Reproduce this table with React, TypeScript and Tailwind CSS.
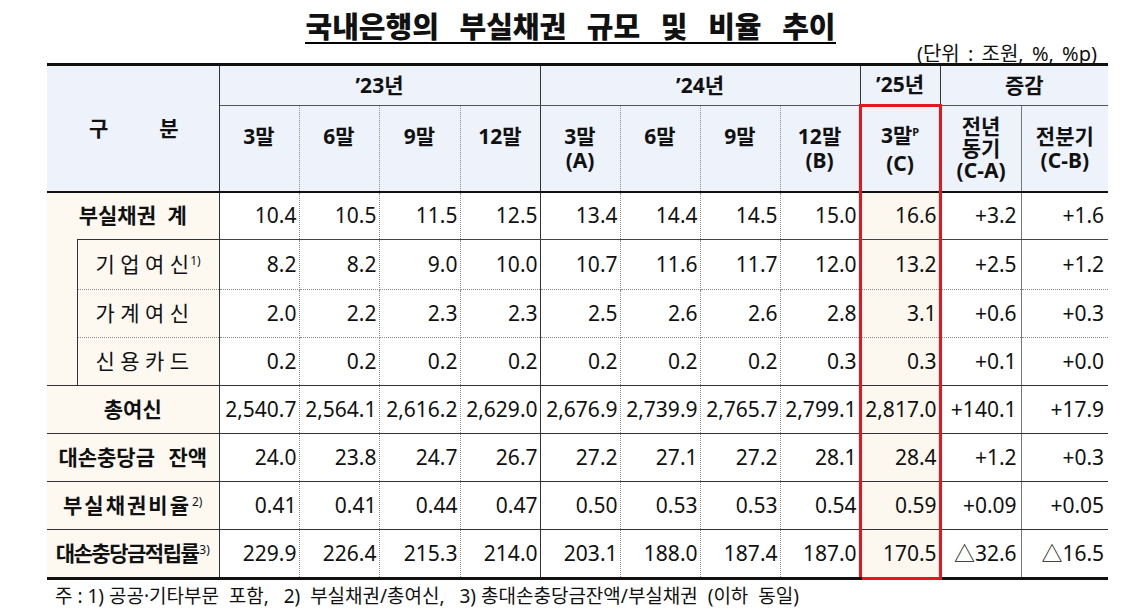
const VDOT = "[border-right:1px_dotted_#8c8c8c]";
const VSOLID = "[border-right:1px_solid_#333]";
const VGRAY = "[border-right:1px_solid_#777]";
const RED = "[border-left:3px_solid_#e5161d] [border-right:3px_solid_#e5161d]";

// right-edge style of each data column
const colRight = [VDOT, VDOT, VDOT, VSOLID, VDOT, VDOT, VDOT, VSOLID, RED, VGRAY, ""];

type Row = {
  label: React.ReactNode;
  sub?: boolean;
  h: string;
  bottom: string;
  values: string[];
};

function Sup({ children }: { children: React.ReactNode }) {
  return <span className="relative -top-[7px] ml-[1px] text-[12px] font-normal tracking-normal">{children}</span>;
}

const rows: Row[] = [
  {
    label: <span className="[word-spacing:6px]">부실채권 계</span>,
    h: "h-[48px]",
    bottom: "[border-bottom:1px_solid_#444]",
    values: ["10.4", "10.5", "11.5", "12.5", "13.4", "14.4", "14.5", "15.0", "16.6", "+3.2", "+1.6"],
  },
  {
    label: (
      <>
        기 업 여 신<Sup>1)</Sup>
      </>
    ),
    sub: true,
    h: "h-[50px]",
    bottom: "[border-bottom:1px_dotted_#8c8c8c]",
    values: ["8.2", "8.2", "9.0", "10.0", "10.7", "11.6", "11.7", "12.0", "13.2", "+2.5", "+1.2"],
  },
  {
    label: "가 계 여 신",
    sub: true,
    h: "h-[48px]",
    bottom: "[border-bottom:1px_dotted_#8c8c8c]",
    values: ["2.0", "2.2", "2.3", "2.3", "2.5", "2.6", "2.6", "2.8", "3.1", "+0.6", "+0.3"],
  },
  {
    label: "신 용 카 드",
    sub: true,
    h: "h-[48px]",
    bottom: "[border-bottom:1px_solid_#333]",
    values: ["0.2", "0.2", "0.2", "0.2", "0.2", "0.2", "0.2", "0.3", "0.3", "+0.1", "+0.0"],
  },
  {
    label: "총여신",
    h: "h-[48px]",
    bottom: "[border-bottom:1px_solid_#333]",
    values: ["2,540.7", "2,564.1", "2,616.2", "2,629.0", "2,676.9", "2,739.9", "2,765.7", "2,799.1", "2,817.0", "+140.1", "+17.9"],
  },
  {
    label: <span className="[word-spacing:8px]">대손충당금 잔액</span>,
    h: "h-[48px]",
    bottom: "[border-bottom:1px_solid_#333]",
    values: ["24.0", "23.8", "24.7", "26.7", "27.2", "27.1", "27.2", "28.1", "28.4", "+1.2", "+0.3"],
  },
  {
    label: (
      <span className="tracking-[2px]">
        부실채권비율<Sup>2)</Sup>
      </span>
    ),
    h: "h-[48px]",
    bottom: "[border-bottom:1px_solid_#333]",
    values: ["0.41", "0.41", "0.44", "0.47", "0.50", "0.53", "0.53", "0.54", "0.59", "+0.09", "+0.05"],
  },
  {
    label: (
      <span className="tracking-[-1.5px]">
        대손충당금적립률<Sup>3)</Sup>
      </span>
    ),
    h: "h-[49px]",
    bottom: "[border-bottom:3px_solid_#111]",
    values: ["229.9", "226.4", "215.3", "214.0", "203.1", "188.0", "187.4", "187.0", "170.5", "△32.6", "△16.5"],
  },
];

const quarterHeads: { top: string; bottom?: string }[] = [
  { top: "3말" },
  { top: "6말" },
  { top: "9말" },
  { top: "12말" },
  { top: "3말", bottom: "(A)" },
  { top: "6말" },
  { top: "9말" },
  { top: "12말", bottom: "(B)" },
];

export default function App() {
  const lastRow = rows.length - 1;
  return (
    <div className="h-[616px] w-[1142px] bg-white pl-[47px] font-['Noto_Sans','Noto_Sans_CJK_KR',sans-serif] text-[#111]">
      <div className="flex h-[44px] w-[1061px] justify-center pt-[10px] pr-[14px]">
        <span className="inline-block border-b-2 border-black font-['Noto_Sans_CJK_KR',sans-serif] text-[29px] leading-[30px] font-black [word-spacing:14px]">
          국내은행의 부실채권 규모 및 비율 추이
        </span>
      </div>
      <div className="flex h-[19px] w-[1061px] justify-end pr-[11px] text-[20px] leading-[19px] [word-spacing:3px]">
        (단위 : 조원, %, %p)
      </div>

      <table className="w-[1061px] table-fixed border-collapse">
        <colgroup>
          <col className="w-[30px]" />
          <col className="w-[142px]" />
          <col className="w-[80px]" />
          <col className="w-[80px]" />
          <col className="w-[81px]" />
          <col className="w-[80px]" />
          <col className="w-[80px]" />
          <col className="w-[80px]" />
          <col className="w-[80px]" />
          <col className="w-[80px]" />
          <col className="w-[80px]" />
          <col className="w-[81px]" />
          <col className="w-[87px]" />
        </colgroup>
        <thead className="bg-[#edf2fb] text-[21px] font-bold">
          <tr className="h-[41px]">
            <th
              colSpan={2}
              rowSpan={2}
              className="p-0 [border-top:3px_solid_#111] [border-right:1px_solid_#333] [border-bottom:2px_solid_#111]"
            >
              <div className="flex justify-center gap-[51px] pl-[2px]">
                <span>구</span>
                <span>분</span>
              </div>
            </th>
            <th colSpan={4} className="p-0 [border-top:3px_solid_#111] [border-right:1px_solid_#333] [border-bottom:1px_solid_#555]">
              ’23년
            </th>
            <th colSpan={4} className="p-0 [border-top:3px_solid_#111] [border-right:1px_solid_#333] [border-bottom:1px_solid_#555]">
              ’24년
            </th>
            <th className="p-0 [border-top:3px_solid_#111] [border-right:1px_solid_#333] [border-bottom:1px_solid_#555]">
              ’25년
            </th>
            <th colSpan={2} className="p-0 [border-top:3px_solid_#111] [border-bottom:1px_solid_#555]">
              증감
            </th>
          </tr>
          <tr className="h-[86px]">
            {quarterHeads.map((q, i) => (
              <th key={i} className={`p-0 [border-bottom:2px_solid_#111] ${colRight[i]}`}>
                <div className="flex flex-col items-center leading-[24px]">
                  <span>{q.top}</span>
                  <span>{q.bottom ?? "\u00a0"}</span>
                </div>
              </th>
            ))}
            <th className={`p-0 [border-top:3px_solid_#e5161d] [border-bottom:2px_solid_#111] ${RED}`}>
              <div className="flex flex-col items-center leading-[24px]">
                <span>
                  3말<span className="relative -top-[7px] text-[11px]">P</span>
                </span>
                <span>(C)</span>
              </div>
            </th>
            <th className={`p-0 [border-bottom:2px_solid_#111] ${VGRAY}`}>
              <div className="flex flex-col items-center leading-[22px]">
                <span>전년</span>
                <span>동기</span>
                <span>(C-A)</span>
              </div>
            </th>
            <th className="p-0 [border-bottom:2px_solid_#111]">
              <div className="flex flex-col items-center leading-[24px]">
                <span>전분기</span>
                <span>(C-B)</span>
              </div>
            </th>
          </tr>
        </thead>
        <tbody className="text-[21px]">
          {rows.map((r, ri) => (
            <tr key={ri} className={r.h}>
              {r.sub ? (
                <>
                  {ri === 1 ? (
                    <td rowSpan={3} className="bg-[#fdf9f1] p-0 [border-bottom:1px_solid_#333]" />
                  ) : null}
                  <td
                    className={`bg-[#fdf9f1] p-0 pl-[18px] text-left whitespace-nowrap [border-left:1px_solid_#333] [border-right:1px_solid_#333] ${
                      ri === 1 ? "[border-top:1px_solid_#333]" : ""
                    } ${r.bottom}`}
                  >
                    {r.label}
                  </td>
                </>
              ) : (
                <td
                  colSpan={2}
                  className={`bg-[#fdf9f1] p-0 text-center font-bold whitespace-nowrap [border-right:1px_solid_#333] ${
                    ri === 0 ? "" : r.bottom
                  }`}
                >
                  {r.label}
                </td>
              )}
              {r.values.map((v, ci) => (
                <td
                  key={ci}
                  className={`p-0 text-right whitespace-nowrap ${ci >= 9 ? "pr-[4px]" : "pr-[2px]"} ${
                    ci === 8 ? "bg-[#fdf8ef]" : ""
                  } ${colRight[ci]} ${
                    ci === 8 && ri === lastRow ? "[border-bottom:3px_solid_#e5161d]" : r.bottom
                  }`}
                >
                  {v}
                </td>
              ))}
            </tr>
          ))}
        </tbody>
      </table>

      <div className="mt-[4px] pl-[8px] text-[19px] leading-[24px] whitespace-pre">
        {"주 : 1) 공공·기타부문  포함,   2)  부실채권/총여신,   3) 총대손충당금잔액/부실채권  (이하  동일)"}
      </div>
    </div>
  );
}
